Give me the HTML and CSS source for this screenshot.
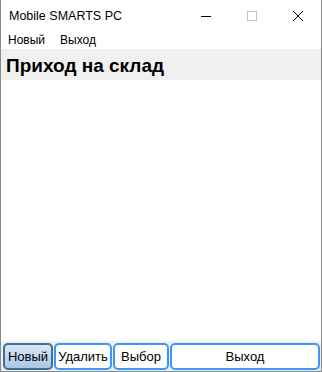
FILE: index.html
```html
<!DOCTYPE html>
<html lang="ru">
<head>
    <meta charset="UTF-8">
    <title>Mobile SMARTS PC</title>
    <link rel="stylesheet" href="styles.css">
</head>
<body>
    <div class="window">
        <div class="titlebar">
            <div class="title">Mobile SMARTS PC</div>
            <div class="caption-btn">
                <svg width="12" height="12" viewBox="0 0 12 12"><path d="M1 6.5h10" stroke="#000" stroke-width="1"/></svg>
            </div>
            <div class="caption-btn">
                <svg width="12" height="12" viewBox="0 0 12 12"><rect x="1.5" y="1.5" width="9" height="9" fill="none" stroke="#c4c4c4" stroke-width="1"/></svg>
            </div>
            <div class="caption-btn">
                <svg width="12" height="12" viewBox="0 0 12 12"><path d="M1 1L11 11M11 1L1 11" stroke="#000" stroke-width="1"/></svg>
            </div>
        </div>

        <div class="menubar">
            <span class="menu-item">Новый</span>
            <span class="menu-item">Выход</span>
        </div>

        <div class="header">Приход на склад</div>

        <div class="content"></div>

        <div class="buttons">
            <button class="btn active btn-new">Новый</button>
            <button class="btn btn-del">Удалить</button>
            <button class="btn btn-sel">Выбор</button>
            <button class="btn btn-exit">Выход</button>
        </div>
    </div>
</body>
</html>
```

FILE: styles.css
```css
body {
    margin: 0;
    font-family: "Liberation Sans", Arial, sans-serif;
    background-color: #ffffff;
}

.window {
    width: 322px;
    height: 372px;
    box-sizing: border-box;
    border-left: 1px solid #8a8a8a;
    border-right: 1px solid #8a8a8a;
    border-bottom: 1px solid #8a8a8a;
    display: flex;
    flex-direction: column;
}

.titlebar {
    height: 31px;
    display: flex;
    align-items: center;
}

.title {
    flex: 1;
    padding-left: 8px;
    font-size: 12.5px;
    color: #000;
}

.caption-btn {
    width: 46px;
    height: 30px;
    display: flex;
    align-items: center;
    justify-content: center;
}

.menubar {
    height: 18px;
    display: flex;
    align-items: center;
    font-size: 12px;
    padding-left: 7px;
}

.menu-item {
    margin-right: 15px;
}

.header {
    height: 31px;
    background-color: #f0f0f0;
    font-size: 19px;
    font-weight: bold;
    padding-left: 5px;
    display: flex;
    align-items: center;
    padding-top: 3px;
    box-sizing: border-box;
}

.content {
    flex: 1;
    background-color: #ffffff;
}

.buttons {
    display: flex;
    gap: 1px;
    padding: 2px 1px 1px 2px;
    background-color: #f0f0f0;
}

.btn {
    height: 27px;
    font-family: "Liberation Sans", Arial, sans-serif;
    font-size: 13px;
    color: #000;
    background-color: #ffffff;
    border: 2px solid #3a96ff;
    border-radius: 5px;
    padding: 0;
}

.btn.active {
    border-color: #3f6f98;
    background: linear-gradient(#dbe9f6, #a7c6e4);
}

.btn-new {
    width: 50px;
}

.btn-del {
    width: 58px;
}

.btn-sel {
    width: 56px;
}

.btn-exit {
    flex: 1;
}
```
